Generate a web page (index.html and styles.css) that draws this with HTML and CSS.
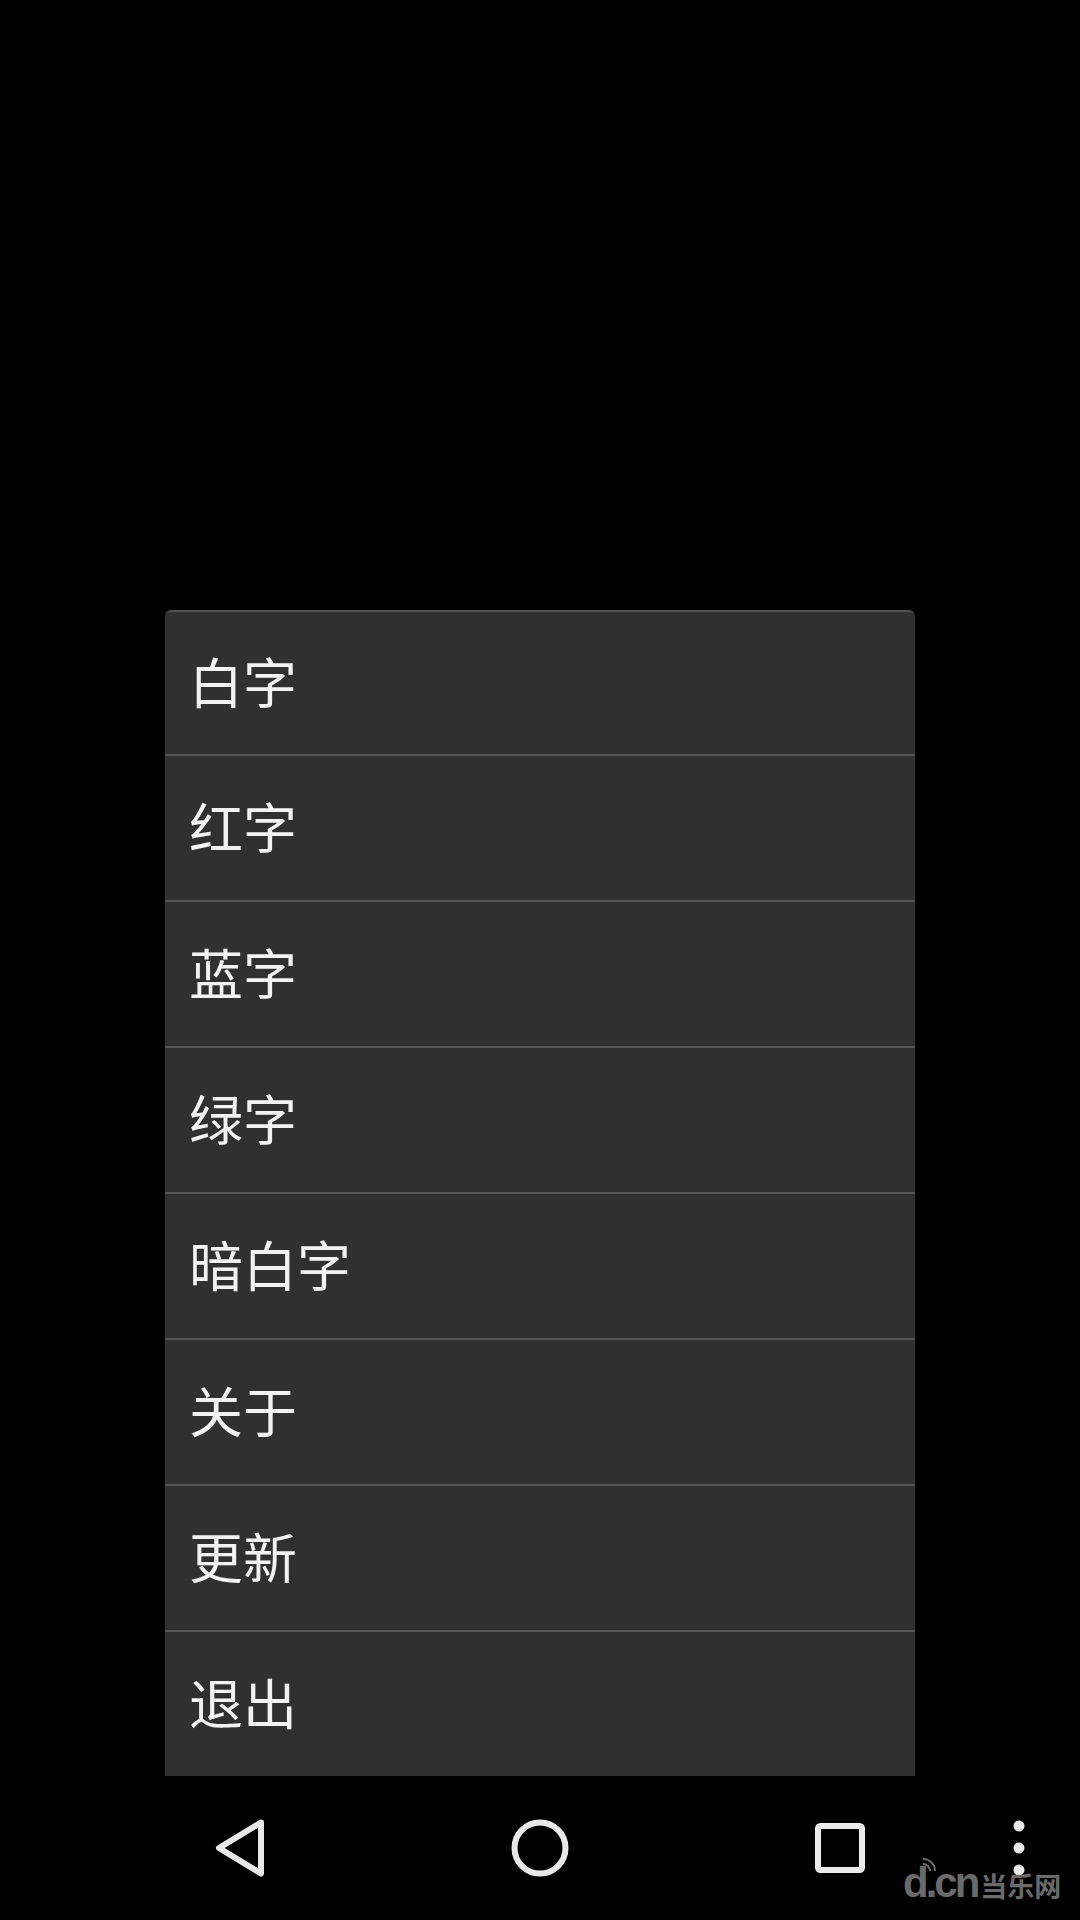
FILE: index.html
```html
<!DOCTYPE html>
<html lang="zh-CN">
<head>
<meta charset="utf-8">
<title>菜单</title>
<link rel="stylesheet" href="styles.css">
</head>
<body>
<main class="screen">
  <ul class="menu">
    <li class="menu-item">白字</li>
    <li class="menu-item">红字</li>
    <li class="menu-item">蓝字</li>
    <li class="menu-item">绿字</li>
    <li class="menu-item">暗白字</li>
    <li class="menu-item">关于</li>
    <li class="menu-item">更新</li>
    <li class="menu-item">退出</li>
  </ul>
  <nav class="nav">
    <svg class="nav-icon" width="60" height="60" viewBox="0 0 60 60"><path d="M51 4.500 L9 30 L51 55.500 Z" fill="none" stroke="#e8e8e8" stroke-width="6" stroke-linejoin="round"/></svg>
    <svg class="nav-icon" width="60" height="60" viewBox="0 0 60 60"><circle cx="30" cy="30" r="25.500" fill="none" stroke="#e8e8e8" stroke-width="6"/></svg>
    <svg class="nav-icon" width="60" height="60" viewBox="0 0 60 60"><rect x="8" y="8" width="44" height="44" rx="2.500" fill="none" stroke="#ececec" stroke-width="6"/></svg>
    <svg class="nav-icon" width="14" height="60" viewBox="0 0 14 60"><circle cx="7" cy="8" r="5.500" fill="#e8e8e8"/><circle cx="7" cy="30" r="5.500" fill="#e8e8e8"/><circle cx="7" cy="52" r="5.500" fill="#e8e8e8"/></svg>
  </nav>
  <div class="watermark">
    <svg class="watermark-signal" width="16" height="16" viewBox="0 0 16 16"><path d="M2 7 A7 7 0 0 1 9 14 M2 2 A12 12 0 0 1 14 14" fill="none" stroke="#6a6a6a" stroke-width="2"/></svg>
    <span class="watermark-latin">d.cn</span><span class="watermark-cjk">当乐网</span>
  </div>
</main>
</body>
</html>
```
FILE: styles.css
```css
* {
  box-sizing: border-box;
}

html,
body {
  margin: 0;
  background: #000;
}

.screen {
  position: relative;
  width: 1080px;
  height: 1920px;
  display: flex;
  flex-direction: column;
  justify-content: flex-end;
  overflow: hidden;
  background: #000;
  font-family: "Noto Sans CJK SC", "Noto Sans", sans-serif;
}

.menu {
  list-style: none;
  margin: 0 165px;
  padding: 0;
  width: 750px;
  background: #303030;
  border-radius: 6px 6px 0 0;
  border-top: 2px solid #505050;
}

.menu-item {
  height: 146px;
  padding-bottom: 5px;
  padding-left: 24px;
  display: flex;
  align-items: center;
  font-size: 54px;
  line-height: 1;
  color: #f2f2f2;
  border-bottom: 2px solid #555;
}

.menu-item:first-child {
  height: 144px;
}

.menu-item:last-child {
  height: 144px;
  border-bottom: 0;
}

.nav {
  height: 144px;
  padding-left: 90px;
  display: grid;
  grid-template-columns: 300px 300px 300px 58px;
  justify-items: center;
  align-items: center;
}

.nav-icon {
  display: block;
}

.watermark {
  position: absolute;
  left: 903px;
  top: 1858px;
  display: flex;
  align-items: baseline;
  color: #6a6a6a;
  font-weight: 700;
  line-height: 50px;
}

.watermark-signal {
  position: absolute;
  left: 18px;
  top: -1px;
}

.watermark-latin {
  font-family: "Liberation Sans", sans-serif;
  font-size: 42px;
  letter-spacing: -3px;
  margin-right: 3px;
}

.watermark-cjk {
  font-size: 27px;
}
```
